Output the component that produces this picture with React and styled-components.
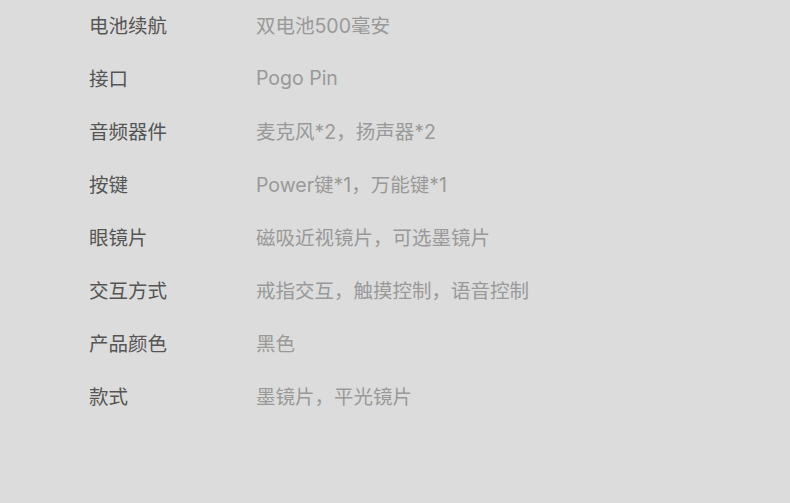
import styled, { createGlobalStyle } from 'styled-components';

const specs = [
  ['电池续航', '双电池500毫安'],
  ['接口', 'Pogo Pin'],
  ['音频器件', '麦克风*2，扬声器*2'],
  ['按键', 'Power键*1，万能键*1'],
  ['眼镜片', '磁吸近视镜片，可选墨镜片'],
  ['交互方式', '戒指交互，触摸控制，语音控制'],
  ['产品颜色', '黑色'],
  ['款式', '墨镜片，平光镜片'],
];

const GlobalStyle = createGlobalStyle`
  html, body {
    margin: 0;
    background: #dcdcdc;
  }
`;

const App = () => (
  <Wrapper>
    <GlobalStyle />
    <Table>
      {specs.map(([label, value]) => (
        <Row key={label}>
          <Label>{label}</Label>
          <Value>{value}</Value>
        </Row>
      ))}
    </Table>
  </Wrapper>
);

const Wrapper = styled.div`
  width: 790px;
  height: 503px;
  background: #dcdcdc;
  font-family: 'Inter', 'Noto Sans CJK SC', sans-serif;
  overflow: hidden;
`;

const Table = styled.div`
  display: flex;
  flex-direction: column;
  margin-top: -1.5px;
  padding-left: 89px;
`;

const Row = styled.div`
  display: grid;
  grid-template-columns: 167px 1fr;
  align-items: center;
  height: 52.9px;
  font-size: 19.5px;
`;

const Label = styled.span`
  color: #555555;
`;

const Value = styled.span`
  color: #999999;
`;

export default App;
